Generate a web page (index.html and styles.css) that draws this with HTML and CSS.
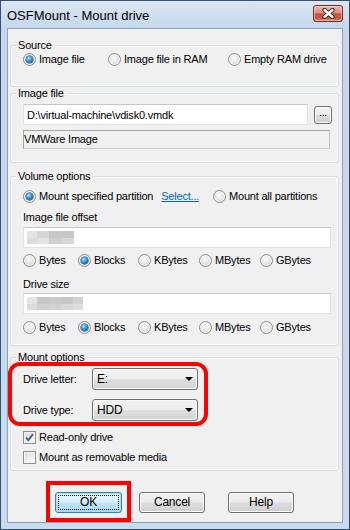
FILE: index.html
```html
<!DOCTYPE html>
<html>
<head>
<meta charset="utf-8">
<title>OSFMount - Mount drive</title>
<link rel="stylesheet" href="styles.css">
</head>
<body>
<div class="window">
  <div class="titlebar">
    <span class="title">OSFMount - Mount drive</span>
    <span class="close">
      <svg width="13" height="11" viewBox="0 0 13 11">
        <path d="M2.5 2 L10.5 9 M10.5 2 L2.5 9" stroke="#3c1a1a" stroke-width="4.2" stroke-linecap="round" fill="none"/>
        <path d="M2.5 2 L10.5 9 M10.5 2 L2.5 9" stroke="#ffffff" stroke-width="2.4" stroke-linecap="round" fill="none"/>
      </svg>
    </span>
  </div>
  <div class="client">
    <fieldset class="group g-source">
      <legend>Source</legend>
      <div class="body">
        <div class="opts src-opts">
          <label class="opt"><span class="radio on"></span>Image file</label>
          <label class="opt"><span class="radio"></span>Image file in RAM</label>
          <label class="opt"><span class="radio"></span>Empty RAM drive</label>
        </div>
      </div>
    </fieldset>

    <fieldset class="group g-image">
      <legend>Image file</legend>
      <div class="body">
        <div class="path-row">
          <div class="field path">D:\virtual-machine\vdisk0.vmdk</div>
          <div class="btn small"><span class="cap">...</span></div>
        </div>
        <div class="static">VMWare Image</div>
      </div>
    </fieldset>

    <fieldset class="group g-volume">
      <legend>Volume options</legend>
      <div class="body">
        <div class="opts part-opts">
          <div class="opt"><span class="radio on"></span>Mount specified partition<span class="link">Select...</span></div>
          <div class="opt"><span class="radio"></span>Mount all partitions</div>
        </div>
        <div class="label first">Image file offset</div>
        <div class="field wide"><span class="blur b1"></span><span class="blur b2"></span><span class="blur b3"></span><span class="blur b4"></span></div>
        <div class="opts unit-opts">
          <div class="opt"><span class="radio"></span>Bytes</div>
          <div class="opt"><span class="radio on"></span>Blocks</div>
          <div class="opt"><span class="radio"></span>KBytes</div>
          <div class="opt"><span class="radio"></span>MBytes</div>
          <div class="opt"><span class="radio"></span>GBytes</div>
        </div>
        <div class="label second">Drive size</div>
        <div class="field wide size"><span class="blur b1"></span><span class="blur b3"></span><span class="blur b2"></span><span class="blur b4"></span><span class="blur b5"></span></div>
        <div class="opts unit-opts last">
          <div class="opt"><span class="radio"></span>Bytes</div>
          <div class="opt"><span class="radio on"></span>Blocks</div>
          <div class="opt"><span class="radio"></span>KBytes</div>
          <div class="opt"><span class="radio"></span>MBytes</div>
          <div class="opt"><span class="radio"></span>GBytes</div>
        </div>
      </div>
    </fieldset>

    <fieldset class="group g-mount">
      <legend>Mount options</legend>
      <div class="body">
        <div class="combo-row">
          <span class="combo-label">Drive letter:</span>
          <div class="combo"><span>E:</span><span class="arrow"></span></div>
        </div>
        <div class="combo-row second">
          <span class="combo-label">Drive type:</span>
          <div class="combo"><span>HDD</span><span class="arrow"></span></div>
        </div>
        <div class="check-row first">
          <span class="check on"><svg width="11" height="11" viewBox="0 0 11 11"><path d="M2 5.5 L4.3 8.2 L9 2.2" stroke="#4b5f8e" stroke-width="1.9" fill="none"/></svg></span>Read-only drive
        </div>
        <div class="check-row second">
          <span class="check"></span>Mount as removable media
        </div>
      </div>
    </fieldset>

    <div class="buttons">
      <div class="btn default ok"><span class="focus">OK</span></div>
      <div class="btn cancel"><span class="cap">Cancel</span></div>
      <div class="btn help"><span class="cap">Help</span></div>
    </div>

    <div class="mark mark-combos"></div>
    <div class="mark mark-ok"></div>
  </div>
</div>
</body>
</html>
```

FILE: styles.css
```css
* { box-sizing: border-box; }
html, body { margin: 0; padding: 0; }
body {
  width: 350px;
  height: 530px;
  overflow: hidden;
  font-family: "Liberation Sans", Arial, sans-serif;
  font-size: 11px;
  letter-spacing: -0.2px;
  color: #000;
  background: #fff;
}

.window {
  width: 350px;
  height: 530px;
  border: 1px solid #34506f;
  background: linear-gradient(#dbe6f3 0, #c4d7ec 28px, #c9dbee 100%);
  padding: 0 6px 6px 6px;
  display: flex;
  flex-direction: column;
}

.titlebar {
  height: 27px;
  display: flex;
  justify-content: space-between;
  align-items: flex-start;
  flex: none;
}
.title {
  font-size: 13px;
  letter-spacing: 0;
  line-height: 16px;
  padding-top: 7px;
  color: #000;
}
.close {
  margin-top: 4px;
  width: 30px;
  height: 17px;
  border: 1px solid #6b2b26;
  border-radius: 3px;
  background: linear-gradient(#eab5aa 0, #dc8f80 45%, #c9523f 52%, #c65a43 80%, #d9876f 100%);
  box-shadow: inset 0 0 0 1px rgba(255, 255, 255, 0.45);
  display: flex;
  align-items: center;
  justify-content: center;
}

.client {
  flex: 1;
  position: relative;
  background: #f0f0f0;
  border: 1px solid #8da2bb;
  display: flex;
  flex-direction: column;
}

.group {
  margin: 0 0 0 2px;
  width: 329px;
  padding: 0;
  min-width: 0;
  border: 1px solid #d5dfe5;
  border-radius: 3px;
  box-shadow: inset 0 0 0 1px #fdfdfd;
}
.group legend {
  margin-left: 5px;
  padding: 0 2px;
  line-height: 12px;
  background: #f0f0f0;
}
.body { padding-left: 12px; }

.g-source { margin-top: 10px; }
.g-source .body { padding-top: 2px; padding-bottom: 20px; }

.g-image .body { padding-top: 5px; padding-bottom: 13px; }

.g-volume { margin-top: 7px; }
.g-volume .body { padding-top: 8px; padding-bottom: 11px; }

.g-mount { margin-top: 5px; }
.g-mount .body { padding-top: 5px; padding-bottom: 6px; }

.opts { display: grid; height: 13px; align-items: center; }
.src-opts { grid-template-columns: 85px 120px auto; }
.part-opts { grid-template-columns: 190px auto; }
.unit-opts { grid-template-columns: 55px 60px 61px 61px auto; margin-top: 6px; }
.unit-opts.last { margin-top: 7px; }

.opt {
  display: flex;
  align-items: center;
  gap: 3px;
  line-height: 13px;
  white-space: nowrap;
}

.radio {
  width: 13px;
  height: 13px;
  flex: none;
  border-radius: 50%;
  border: 1px solid #8b8c8c;
  background: radial-gradient(circle at 45% 40%, #fbfbfb 0, #e6e6e6 45%, #cdcdcd 100%);
  box-shadow: inset 0 0 0 1px #f6f6f6;
  display: flex;
  align-items: center;
  justify-content: center;
}
.radio.on::after {
  content: "";
  width: 7px;
  height: 7px;
  border-radius: 50%;
  background: radial-gradient(circle at 40% 35%, #b6ecff 0, #3aa7e6 35%, #0d5fa8 75%, #0a3f73 100%);
  box-shadow: 0 0 0 0.5px #1b3f66;
}

.link {
  color: #0066cc;
  text-decoration: underline;
  margin-left: 5px;
}

.label { line-height: 14px; height: 14px; }
.label.first { margin-top: 7px; }
.label.second { margin-top: 10px; }

.field {
  background: #fff;
  border: 1px solid #e2e3ea;
  border-top-color: #c5c7cd;
  height: 21px;
  display: flex;
  align-items: center;
}
.path-row {
  display: flex;
  align-items: center;
  gap: 6px;
}
.field.path {
  width: 285px;
  padding-left: 3px;
}
.field.wide {
  width: 308px;
  margin-top: 3px;
  padding-left: 3px;
}
.field.size { margin-top: 2px; }

.blur { height: 13px; display: inline-block; }
.blur.b1 { width: 10px; background: linear-gradient(#e4e4e4 50%, #dcdcdc 50%); }
.blur.b2 { width: 12px; background: linear-gradient(#d6d6d6 50%, #e2e2e2 50%); }
.blur.b3 { width: 13px; background: linear-gradient(#c7c7c7 50%, #cfcfcf 50%); }
.blur.b4 { width: 12px; background: linear-gradient(#c6c6c6 50%, #d8d8d8 50%); }
.blur.b5 { width: 10px; background: linear-gradient(#d2d2d2 50%, #dedede 50%); }
.size .b3 { width: 12px; }
.size .b2 { width: 12px; background: linear-gradient(#cacaca 50%, #d2d2d2 50%); }

.static {
  margin-top: 5px;
  width: 307px;
  height: 19px;
  border: 1px solid #a3a3a3;
  border-right-color: #c8c8c8;
  border-bottom-color: #c8c8c8;
  line-height: 17px;
  padding-left: 0;
}

.btn {
  height: 21px;
  width: 66px;
  border: 1px solid #707070;
  border-radius: 3px;
  background: linear-gradient(#f2f2f2 0, #ebebeb 48%, #dddddd 52%, #cfcfcf 100%);
  box-shadow: inset 0 0 0 1px #fbfbfb;
  display: flex;
  align-items: center;
  justify-content: center;
  line-height: 13px;
  font-size: 12px;
}
.btn.small {
  width: 18px;
  height: 18px;
  font-size: 10px;
  align-items: flex-end;
  padding-bottom: 4px;
}
.btn.default {
  width: 67px;
  border-color: #3c7fb1;
  box-shadow: inset 0 0 0 1px #9ce1fb;
  background: linear-gradient(#eaf6fd 0, #d9f0fc 48%, #bee6fd 52%, #a7d9f5 100%);
  padding: 2px;
}
.focus {
  flex: 1;
  align-self: stretch;
  border: 1px dotted #000;
  display: flex;
  align-items: center;
  justify-content: center;
}

.combo-row {
  display: flex;
  align-items: center;
  height: 22px;
}
.combo-row.second { margin-top: 9px; }
.combo-label { width: 69px; }
.combo {
  width: 106px;
  height: 22px;
  border: 1px solid #707070;
  border-radius: 3px;
  background: linear-gradient(#f3f3f3 0, #ececec 48%, #dfdfdf 52%, #d3d3d3 100%);
  box-shadow: inset 0 0 0 1px #fafafa;
  display: flex;
  align-items: center;
  justify-content: space-between;
  padding: 0 4px 0 4px;
  font-size: 12px;
}
.arrow {
  width: 0;
  height: 0;
  border-left: 4px solid transparent;
  border-right: 4px solid transparent;
  border-top: 4px solid #000;
}

.check-row {
  display: flex;
  align-items: center;
  gap: 3px;
  height: 13px;
  line-height: 13px;
}
.check-row.first { margin-top: 10px; }
.check-row.second { margin-top: 7px; }
.check {
  width: 13px;
  height: 13px;
  flex: none;
  border: 1px solid #8e8f8f;
  background: linear-gradient(135deg, #d9d9d9 0, #f2f2f2 60%, #fdfdfd 100%);
  box-shadow: inset 0 0 0 1px #f4f4f4;
  display: flex;
  align-items: center;
  justify-content: center;
}

.buttons {
  margin-top: 21px;
  padding-left: 47px;
  display: flex;
}
.btn.ok { margin-right: 17px; }
.btn.cancel { margin-right: 23px; }

.mark {
  position: absolute;
  border: 4px solid #ff0000;
}
.mark-combos {
  left: 0;
  top: 333px;
  width: 200px;
  height: 64px;
  border-radius: 12px;
}
.mark-ok {
  left: 38px;
  top: 452px;
  width: 85px;
  height: 41px;
}
```
